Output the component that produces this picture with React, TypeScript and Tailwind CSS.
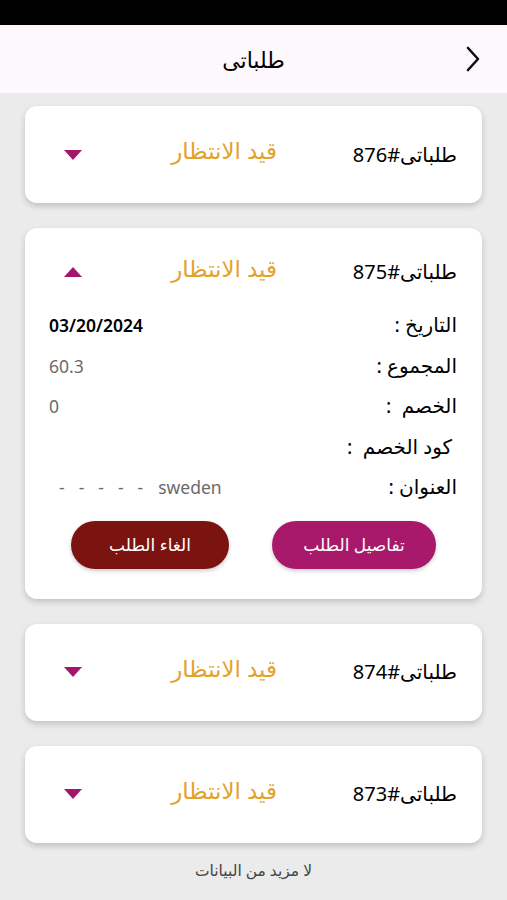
const font = { fontFamily: '"Noto Sans", "DejaVu Sans", sans-serif' };

const orders = [
  { id: '876', open: false },
  { id: '875', open: true },
  { id: '874', open: false },
  { id: '873', open: false },
];

function Triangle({ up }: { up: boolean }) {
  return (
    <svg width="18" height="10" viewBox="0 0 18 10" className="shrink-0">
      {up ? <polygon points="0,10 18,10 9,0" fill="#a3176b" /> : <polygon points="0,0 18,0 9,10" fill="#a3176b" />}
    </svg>
  );
}

function OrderHeader({ id, open }: { id: string; open: boolean }) {
  return (
    <div className="flex items-center pr-[25px] pl-[39px] h-full">
      <div className="w-[180px] shrink-0 flex justify-start">
        <span dir="ltr" className="text-[20px] text-black">{id}#طلباتی</span>
      </div>
      <span className="text-[23px] font-medium text-[#e3a22a] -translate-y-[4px]">قيد الانتظار</span>
      <div className="mr-auto">
        <Triangle up={open} />
      </div>
    </div>
  );
}

const details = [
  { label: 'التاريخ :', value: '03/20/2024', cls: 'text-black font-semibold text-[17.5px]', indent: '' },
  { label: 'المجموع :', value: '60.3', cls: 'text-[#6b6b6b] text-[17.5px]', indent: '' },
  { label: 'الخصم  :', value: '0', cls: 'text-[#6b6b6b] text-[17.5px]', indent: '' },
  { label: 'كود الخصم  :', value: '', cls: '', indent: 'mr-[5px]' },
];

export default function App() {
  return (
    <div dir="rtl" className="min-h-[900px] bg-[#ebebeb]" style={font}>
      <div className="h-[25px] bg-black"></div>
      <div className="h-[68px] bg-[#fcf8fb] flex items-center justify-center relative">
        <span className="text-[22px] text-black">طلباتی</span>
        <svg width="16" height="26" viewBox="0 0 16 26" className="absolute right-[26px] top-1/2 -translate-y-1/2" fill="none" stroke="#111" strokeWidth="2.6" strokeLinecap="round" strokeLinejoin="round">
          <polyline points="3,2 13,13 3,24" />
        </svg>
      </div>

      <div className="px-[25px] pt-[13px] flex flex-col gap-[25px]">
        {orders.map((o) =>
          o.open ? (
            <div key={o.id} className="bg-white rounded-[12px] shadow-[0_3px_6px_rgba(0,0,0,0.18)] pt-[24px] pb-[30px]">
              <div className="h-[40px]">
                <OrderHeader id={o.id} open />
              </div>
              <div className="mt-[13px] pr-[25px] pl-[24px]">
                {details.map((d) => (
                  <div key={d.label} className="h-[40.5px] flex items-center justify-between">
                    <span className={`text-[20px] text-black whitespace-pre ${d.indent}`}>{d.label}</span>
                    <span dir="ltr" className={d.cls}>{d.value}</span>
                  </div>
                ))}
                <div className="h-[40.5px] flex items-center justify-between">
                  <span className="text-[20px] text-black">العنوان :</span>
                  <div dir="ltr" className="flex items-center gap-[14px] pl-[10px] text-[17.5px] text-[#6b6b6b]">
                    <span>-</span>
                    <span>-</span>
                    <span>-</span>
                    <span>-</span>
                    <span>-</span>
                    <span className="ml-[1px]">sweden</span>
                  </div>
                </div>
              </div>
              <div className="mt-[13px] pr-[46px] flex gap-[43px]">
                <button className="w-[164px] h-[48px] rounded-full bg-[#a8196b] text-white text-[17px] shadow-[0_2px_4px_rgba(0,0,0,0.2)]">
                  تفاصيل الطلب
                </button>
                <button className="w-[158px] h-[48px] rounded-full bg-[#7b1410] text-white text-[17px] shadow-[0_2px_4px_rgba(0,0,0,0.2)]">
                  الغاء الطلب
                </button>
              </div>
            </div>
          ) : (
            <div key={o.id} className="bg-white rounded-[12px] shadow-[0_3px_6px_rgba(0,0,0,0.18)] h-[97px]">
              <OrderHeader id={o.id} open={false} />
            </div>
          )
        )}
      </div>

      <div className="pt-[16px] text-center text-[15.5px] text-[#444]">لا مزيد من البيانات</div>
    </div>
  );
}
